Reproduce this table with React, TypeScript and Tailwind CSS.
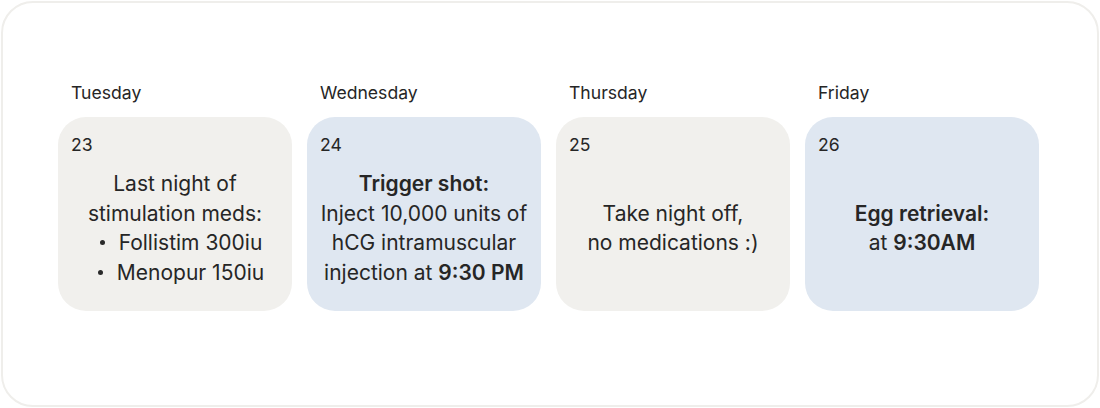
import React from 'react';

type Day = {
  label: string;
  date: string;
  tone: 'gray' | 'blue';
  body: React.ReactNode;
};

const Bullet: React.FC<{ children: React.ReactNode }> = ({ children }) => (
  <li className="flex items-center justify-center">
    <span className="inline-block w-[5px] h-[5px] rounded-full bg-[#2a2a2a] mr-[14px]" />
    <span>{children}</span>
  </li>
);

const days: Day[] = [
  {
    label: 'Tuesday',
    date: '23',
    tone: 'gray',
    body: (
      <div>
        <p>Last night of</p>
        <p>stimulation meds:</p>
        <ul className="pl-3">
          <Bullet>Follistim 300iu</Bullet>
          <Bullet>Menopur 150iu</Bullet>
        </ul>
      </div>
    ),
  },
  {
    label: 'Wednesday',
    date: '24',
    tone: 'blue',
    body: (
      <div>
        <p className="font-semibold">Trigger shot:</p>
        <p>Inject 10,000 units of</p>
        <p>hCG intramuscular</p>
        <p>
          injection at <span className="font-semibold">9:30 PM</span>
        </p>
      </div>
    ),
  },
  {
    label: 'Thursday',
    date: '25',
    tone: 'gray',
    body: (
      <div>
        <p>Take night off,</p>
        <p>no medications :)</p>
      </div>
    ),
  },
  {
    label: 'Friday',
    date: '26',
    tone: 'blue',
    body: (
      <div>
        <p className="font-semibold">Egg retrieval:</p>
        <p>
          at <span className="font-semibold">9:30AM</span>
        </p>
      </div>
    ),
  },
];

export default function App() {
  return (
    <div className="w-[1100px] h-[408px] bg-white p-[1px] font-['Inter',sans-serif] text-[#262626]">
      <div className="w-full h-full border-2 border-[#efeeeb] rounded-[32px] pl-[55px] pt-[78px]">
        <div className="flex gap-[15px]">
          {days.map((d) => (
            <div key={d.label} className="w-[234px] flex flex-col">
              <div className="pl-[13px] text-[17.6px] leading-6">{d.label}</div>
              <div
                className={
                  'mt-[12px] h-[194px] rounded-[28px] flex flex-col pt-4 px-[13px] pb-3 ' +
                  (d.tone === 'gray' ? 'bg-[#f1f0ed]' : 'bg-[#dfe7f1]')
                }
              >
                <div className="text-[17.6px] leading-6">{d.date}</div>
                <div className="flex-1 flex items-center justify-center text-center text-[21px] leading-[29.5px] whitespace-nowrap">
                  {d.body}
                </div>
              </div>
            </div>
          ))}
        </div>
      </div>
    </div>
  );
}
